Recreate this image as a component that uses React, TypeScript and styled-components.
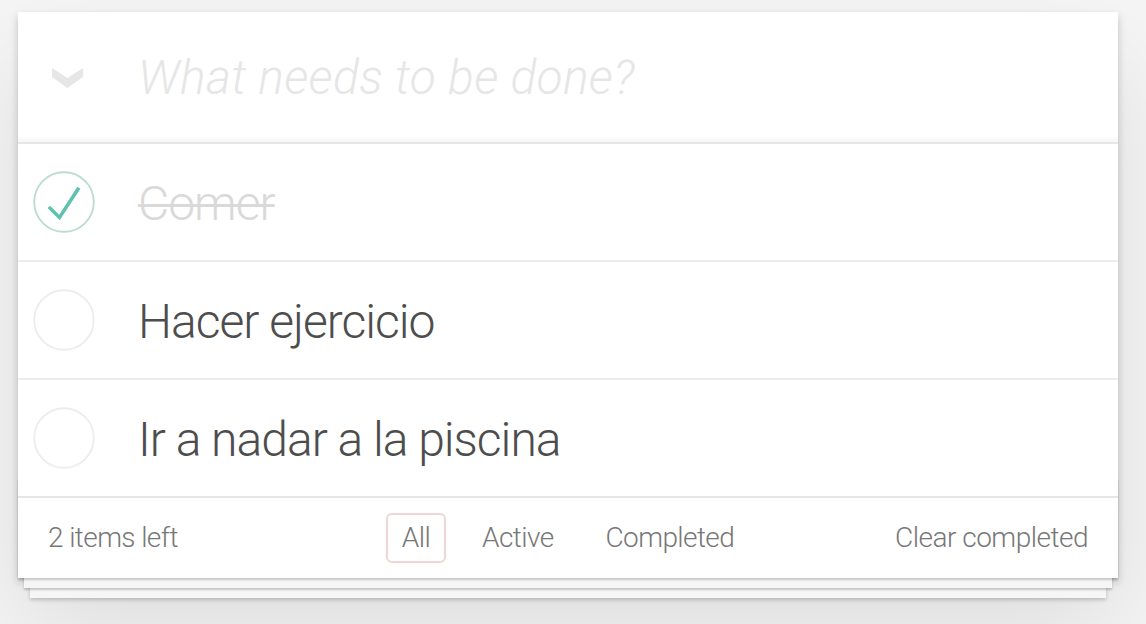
import React from 'react'
import styled, { createGlobalStyle } from 'styled-components'

const GlobalStyle = createGlobalStyle`
  html, body {
    margin: 0;
    padding: 0;
  }
  body {
    background: #f5f5f5;
    font-family: Roboto, "Helvetica Neue", "Liberation Sans", sans-serif;
    font-weight: 300;
    color: #4d4d4d;
    -webkit-font-smoothing: antialiased;
  }
`

const Page = styled.div`
  padding: 12px 0 60px 18px;
`

const TodoApp = styled.section`
  position: relative;
  width: 1100px;
  background: #fff;
  box-shadow: 0 4px 8px 0 rgba(0, 0, 0, 0.2), 0 50px 100px 0 rgba(0, 0, 0, 0.1);
`

// stacked paper sheets under the footer
const Sheets = styled.div`
  position: absolute;
  left: 0;
  right: 0;
  bottom: 0;
  height: 100px;
  box-shadow: 0 2px 2px rgba(0, 0, 0, 0.2), 0 16px 0 -6px #f6f6f6,
    0 18px 2px -6px rgba(0, 0, 0, 0.2), 0 32px 0 -12px #f6f6f6,
    0 34px 4px -12px rgba(0, 0, 0, 0.2);
`

const Header = styled.header`
  position: relative;
  display: flex;
  align-items: center;
  height: 130px;
  box-shadow: inset 0 -4px 2px rgba(0, 0, 0, 0.03);
`

const ToggleAll = styled.label`
  display: flex;
  align-items: center;
  width: 86px;
  padding-left: 34px;
  height: 100%;
  svg {
    display: block;
    margin-top: 2px;
  }
`

const NewTodo = styled.input`
  flex: 1;
  min-width: 0;
  border: none;
  outline: none;
  background: transparent;
  padding: 33px 32px 31px 0;
  font-family: inherit;
  font-size: 48px;
  font-weight: 300;
  line-height: 66px;
  letter-spacing: 0.3px;
  color: #4d4d4d;

  &::placeholder {
    font-style: italic;
    font-weight: 300;
    color: #e6e6e6;
  }
`

const Main = styled.section`
  position: relative;
  z-index: 2;
  border-top: 2px solid #e6e6e6;
`

const TodoList = styled.ul`
  margin: 0;
  padding: 0;
  list-style: none;
`

const TodoItem = styled.li`
  display: flex;
  align-items: center;
  border-bottom: 2px solid #ededed;

  &:last-child {
    border-bottom: none;
  }
`

const Toggle = styled.span`
  display: flex;
  align-items: center;
  width: 105px;
  padding-left: 15px;
  svg {
    display: block;
  }
`

const Label = styled.label<{ $done?: boolean }>`
  flex: 1;
  padding: 32px 30px 28px 0;
  font-size: 48px;
  line-height: 56px;
  font-weight: 300;
  letter-spacing: -1px;
  white-space: nowrap;
  color: ${({ $done }) => ($done ? '#d9d9d9' : '#4d4d4d')};
  text-decoration: ${({ $done }) => ($done ? 'line-through' : 'none')};
  text-decoration-thickness: 3px;
  transition: color 0.4s;
`

const Footer = styled.footer`
  position: relative;
  z-index: 1;
  display: grid;
  grid-template-columns: 1fr auto 1fr;
  grid-template-rows: 50px;
  align-items: center;
  height: 50px;
  padding: 15px 30px;
  border-top: 2px solid #e6e6e6;
  font-size: 28px;
  line-height: 50px;
  letter-spacing: -0.6px;
  color: #777;
`

const Count = styled.span`
  justify-self: start;
`

const Filters = styled.ul`
  display: flex;
  margin: 0;
  padding: 0;
  list-style: none;
`

const FilterLink = styled.a<{ $selected?: boolean }>`
  display: block;
  margin: 0 10px;
  padding: 0 14px;
  line-height: 46px;
  border: 2px solid ${({ $selected }) => ($selected ? 'rgba(175, 47, 47, 0.2)' : 'transparent')};
  border-radius: 6px;
  color: inherit;
  text-decoration: none;
`

const ClearCompleted = styled.button`
  justify-self: end;
  margin: 0;
  padding: 0;
  border: none;
  background: none;
  font-family: inherit;
  font-size: 28px;
  font-weight: 300;
  line-height: 50px;
  letter-spacing: -0.5px;
  color: inherit;
  cursor: pointer;
`

const Chevron = () => (
  <svg width="31" height="20" viewBox="0 0 31 20">
    <polygon points="0,0 15.5,10 31,0 31,9 15.5,20 0,9" fill="#e6e6e6" />
  </svg>
)

const CheckCircle = ({ done }: { done: boolean }) => (
  <svg width="62" height="62" viewBox="-1 -1 102 102">
    <circle
      cx="50"
      cy="50"
      r="49"
      fill="none"
      stroke={done ? '#bddad5' : '#ededed'}
      strokeWidth="3"
    />
    {done && <path d="M72 25L42 71 27 56l-4 4 20 20 34-52z" fill="#5dc2af" />}
  </svg>
)

const todos = [
  { id: 1, title: 'Comer', done: true },
  { id: 2, title: 'Hacer ejercicio', done: false },
  { id: 3, title: 'Ir a nadar a la piscina', done: false },
]

const filters = ['All', 'Active', 'Completed']

const App = () => {
  const left = todos.filter((t) => !t.done).length

  return (
    <>
      <GlobalStyle />
      <Page>
        <TodoApp>
          <Sheets />
          <Header>
            <ToggleAll>
              <Chevron />
            </ToggleAll>
            <NewTodo placeholder="What needs to be done?" />
          </Header>
          <Main>
            <TodoList>
              {todos.map((todo) => (
                <TodoItem key={todo.id}>
                  <Toggle>
                    <CheckCircle done={todo.done} />
                  </Toggle>
                  <Label $done={todo.done}>{todo.title}</Label>
                </TodoItem>
              ))}
            </TodoList>
          </Main>
          <Footer>
            <Count>{left} items left</Count>
            <Filters>
              {filters.map((f) => (
                <li key={f}>
                  <FilterLink href="#/" $selected={f === 'All'}>
                    {f}
                  </FilterLink>
                </li>
              ))}
            </Filters>
            <ClearCompleted>Clear completed</ClearCompleted>
          </Footer>
        </TodoApp>
      </Page>
    </>
  )
}

export default App
